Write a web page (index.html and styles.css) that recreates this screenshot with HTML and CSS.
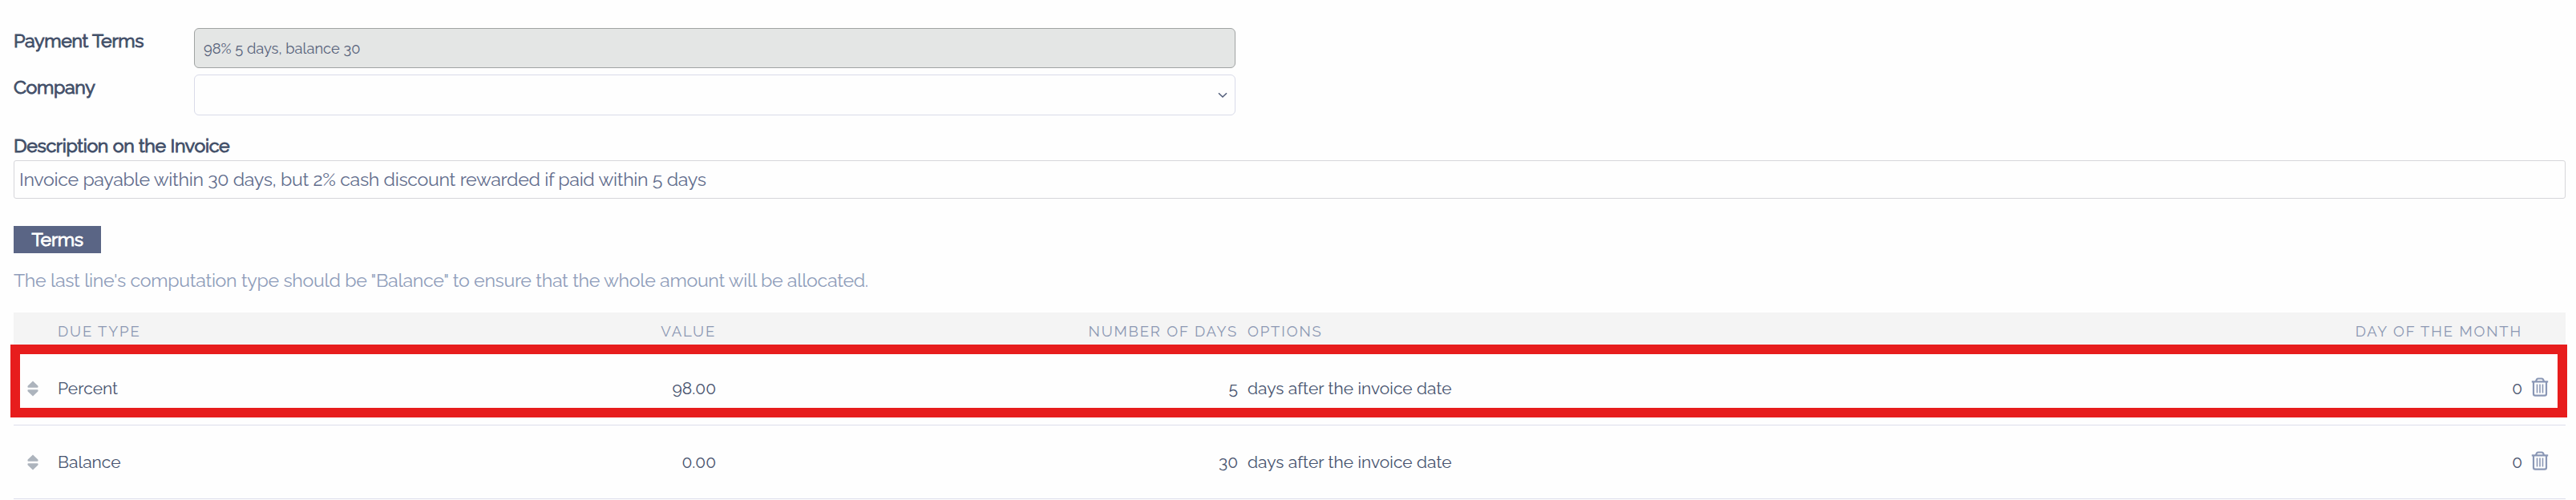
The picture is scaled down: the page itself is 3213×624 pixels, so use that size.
FILE: index.html
```
<!DOCTYPE html>
<html lang="en">
<head>
  <meta charset="UTF-8" />
  <meta name="viewport" content="width=device-width, initial-scale=1.0" />
  <title>Payment Terms</title>
  <link rel="stylesheet" href="styles.css">
</head>
<body>
  <svg width="0" height="0" class="sprite">
    <symbol id="sort" viewBox="0 0 14 20">
      <path d="M7 .5 L13.3 6.6 Q14.2 8.7 12.5 8.8 H1.5 Q-.2 8.7 .7 6.6 Z M7 19.5 L13.3 13.4 Q14.2 11.3 12.5 11.2 H1.5 Q-.2 11.3 .7 13.4 Z" fill="#adb4bd"/>
    </symbol>
    <symbol id="trash" viewBox="0 0 22 24">
      <path d="M.8 5.3 H21.2 M6 5 Q6.8 1.5 8.8 1.5 H13.2 Q15.2 1.5 16 5 M3 5 V20.4 Q3 22.6 5.2 22.6 H16.8 Q19 22.6 19 20.4 V5" fill="none" stroke="#8a97b5" stroke-width="2.2"/>
      <path d="M7.5 8.5 V19.5 M11 8.5 V19.5 M14.5 8.5 V19.5" fill="none" stroke="#8a97b5" stroke-width="1.6"/>
    </symbol>
  </svg>

  <div class="form">
    <div class="field">
      <label>Payment Terms</label>
      <div class="input readonly"><span>98% 5 days, balance 30</span></div>
    </div>
    <div class="field">
      <label>Company</label>
      <div class="input select">
        <svg class="chevron" viewBox="0 0 12 8"><path d="M1 1.2 L6 6 L11 1.2" fill="none" stroke="#4f5b78" stroke-width="1.5"/></svg>
      </div>
    </div>
    <label class="description-label">Description on the Invoice</label>
    <div class="description"><span>Invoice payable within 30 days, but 2% cash discount rewarded if paid within 5 days</span></div>
  </div>

  <div class="separator"><span>Terms</span></div>
  <p class="help"><span>The last line's computation type should be "Balance" to ensure that the whole amount will be allocated.</span></p>

  <div class="lines">
    <div class="row head">
      <span></span>
      <span>Due Type</span>
      <span class="number">Value</span>
      <span class="number">Number of Days</span>
      <span class="options">Options</span>
      <span class="number">Day of the month</span>
      <span></span>
    </div>
    <div class="row highlight">
      <svg class="handle"><use href="#sort"/></svg>
      <span>Percent</span>
      <span class="number">98.00</span>
      <span class="number">5</span>
      <span class="options">days after the invoice date</span>
      <span class="number">0</span>
      <svg class="trash"><use href="#trash"/></svg>
    </div>
    <div class="row">
      <svg class="handle"><use href="#sort"/></svg>
      <span>Balance</span>
      <span class="number">0.00</span>
      <span class="number">30</span>
      <span class="options">days after the invoice date</span>
      <span class="number">0</span>
      <svg class="trash"><use href="#trash"/></svg>
    </div>
  </div>
</body>
</html>
```
FILE: styles.css
```
*,
*::after {
  box-sizing: border-box;
}

body {
  margin: 0;
  padding: 35px 13px 0 17px;
  height: 624px;
  overflow: hidden;
  background: #fefefe;
  color: #47536e;
  font-family: Raleway, Lato, sans-serif;
}

.sprite {
  position: absolute;
}

.field {
  display: flex;
  height: 50px;
  margin-bottom: 8px;
}

label {
  width: 225px;
  padding-top: 2px;
  font-size: 23.2px;
  line-height: 28px;
  letter-spacing: -0.32px;
  color: #435069;
  -webkit-text-stroke: 1px #435069;
}

.input {
  width: 1299px;
  height: 50px;
  border: 1px solid #d9dbe9;
  border-radius: 6px;
  padding: 0 11px;
  font-size: 18.3px;
  line-height: 49px;
}

.readonly {
  background: #e4e6e5;
  border-color: #a0a3a3;
  color: #56617a;
}

.select {
  height: 51px;
  display: flex;
  align-items: center;
  justify-content: flex-end;
  padding-right: 9px;
}

.chevron {
  width: 12px;
  height: 8px;
}

.description-label {
  display: block;
  width: auto;
  height: 33px;
  margin-top: 24px;
  padding-top: 1px;
}

.description {
  height: 48px;
  border: 1px solid #d6d6da;
  border-radius: 3px;
  padding-left: 6px;
  font-size: 23.2px;
  line-height: 45px;
  letter-spacing: -0.32px;
  color: #626d8d;
}

.separator {
  display: flex;
  justify-content: center;
  width: 109px;
  height: 34px;
  margin-top: 34px;
  background: #5a6585;
  color: #fff;
  font-size: 23.2px;
  line-height: 33px;
  letter-spacing: -0.32px;
  -webkit-text-stroke: 1px #fff;
}

.help {
  height: 40px;
  margin: 14px 0 20px;
  font-size: 23.2px;
  line-height: 40px;
  letter-spacing: -0.32px;
  color: #8f9dba;
}

.row {
  display: grid;
  grid-template-columns: 55px 400px 421px 651px 12px 1590px 1fr;
  align-items: center;
  position: relative;
  height: 92px;
  border-bottom: 1px solid #dcdeeb;
  font-size: 21px;
}

.head {
  height: 49px;
  padding-bottom: 2px;
  border-bottom: 0;
  background: #f4f4f4;
  color: #8c98b3;
  font-size: 18.5px;
  letter-spacing: 1.85px;
  text-transform: uppercase;
}

.number {
  text-align: right;
}

/* options share the start of the wide column */
.row .options,
.row .options + .number {
  grid-column: 6;
  grid-row: 1;
}

.handle {
  width: 14px;
  height: 20px;
  margin-left: 17px;
}

.trash {
  grid-column: 7;
  width: 22px;
  height: 24px;
  margin: -3px 0 0 11px;
}

/* red frame around the first term */
.highlight::after {
  content: '';
  position: absolute;
  top: -9px;
  left: -4px;
  right: -2px;
  height: 91px;
  border: 12px solid #e71d1d;
}
```
